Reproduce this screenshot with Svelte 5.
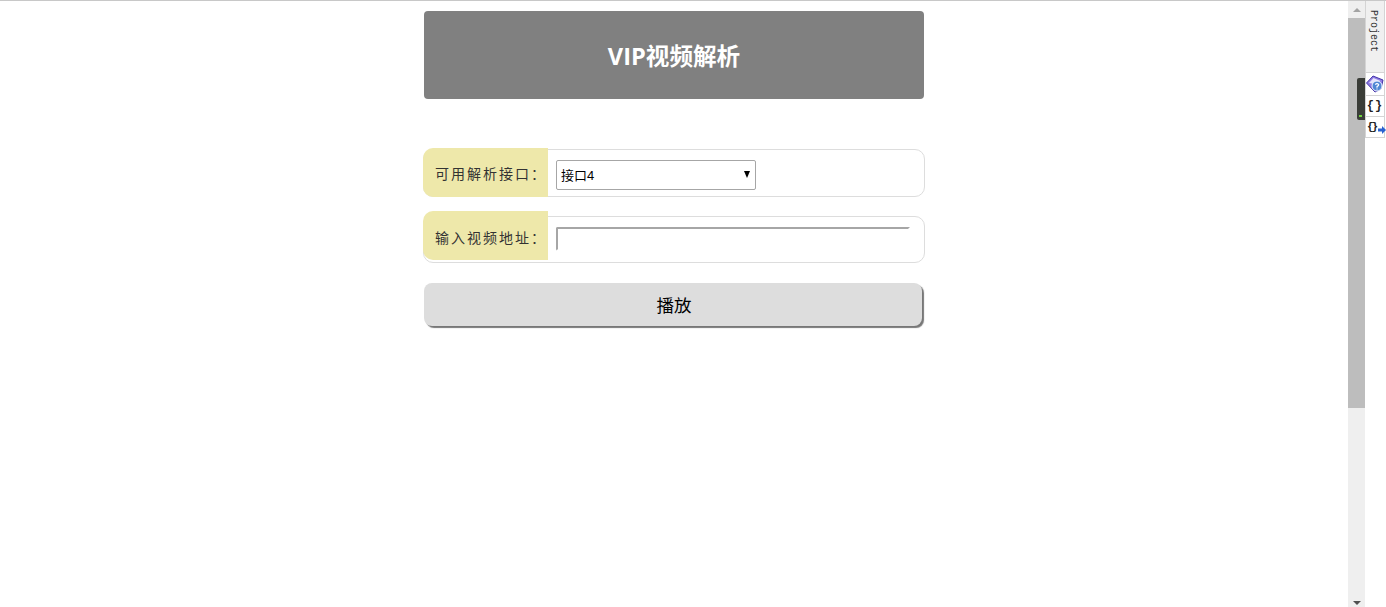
<script>
  let api = 'api4';
  let url = '';
  const apis = [
    { value: 'api1', label: '接口1' },
    { value: 'api2', label: '接口2' },
    { value: 'api3', label: '接口3' },
    { value: 'api4', label: '接口4' }
  ];
</script>

<div class="window">
  <main class="page">
    <div class="container">
      <h1 class="title">VIP视频解析</h1>

      <div class="field first">
        <label class="addon" for="api">可用解析接口：</label>
        <div class="control">
          <div class="select-box">
            <select id="api" bind:value={api}>
              {#each apis as item}
                <option value={item.value}>{item.label}</option>
              {/each}
            </select>
            <span class="caret"></span>
          </div>
        </div>
      </div>

      <div class="field">
        <label class="addon second" for="url">输入视频地址：</label>
        <div class="control">
          <input id="url" type="text" bind:value={url} />
        </div>
      </div>

      <button class="play" type="button">播放</button>
    </div>
  </main>

  <div class="scrollbar">
    <span class="arrow up"></span>
    <div class="thumb"></div>
    <span class="arrow down"></span>
    <div class="meter"><span class="led"></span></div>
  </div>

  <aside class="toolbar">
    <div class="tab-project"><span>Project</span></div>
    <div class="tool help">
      <svg width="18" height="18" viewBox="0 0 18 18">
        <path d="M0.5 8 L7 1 L17 5 L15 14 L9 17 Z" fill="#8f7de4" stroke="#4434a8" stroke-width="1" />
        <path d="M3 8 L7.5 3 L14.5 6 L9 9 Z" fill="#e6e2fb" />
        <circle cx="11" cy="11" r="5" fill="#4f86d4" stroke="#eef2ff" stroke-width="1" />
        <path d="M9.3 9.6 Q11 7.8 12.7 9.6 Q12.7 10.8 11 11.6 L11 12.8 M11 13.6 L11 14.6" fill="none" stroke="#fff" stroke-width="1.2" />
      </svg>
    </div>
    <div class="tool braces">{'{}'}</div>
    <div class="tool braces-go">
      <span>{'{}'}</span>
      <svg width="8" height="8" viewBox="0 0 8 8"><path d="M0 2.5 H4 V0 L8 4 L4 8 V5.5 H0 Z" fill="#2a62d0" /></svg>
    </div>
  </aside>
</div>

<style>
  :global(body) {
    margin: 0;
    background: #fff;
    overflow: hidden;
  }

  .window {
    display: flex;
    height: 607px;
    box-sizing: border-box;
    border-top: 1px solid #c8c8c8;
    font-family: "Liberation Sans", "Noto Sans CJK SC", sans-serif;
  }

  .page {
    width: 1348px;
    flex: none;
  }

  .container {
    width: 500px;
    margin: 10px auto 0;
  }

  .title {
    margin: 0 0 50px;
    height: 88px;
    line-height: 90px;
    background: #808080;
    border-radius: 4px;
    color: #fff;
    font-family: "Open Sans", "Noto Sans CJK SC", sans-serif;
    font-size: 23.6px;
    font-weight: 700;
    text-align: center;
  }

  .field {
    display: flex;
    height: 47px;
    box-sizing: border-box;
    border: 1px solid #ddd;
    border-radius: 10px;
    margin: 0 -1px 20px;
  }

  .field.first {
    height: 48px;
    margin-bottom: 19px;
  }

  .addon {
    flex: none;
    width: 125px;
    height: 49px;
    margin: -2px 0 0 -1px;
    background: #eee8aa;
    border-radius: 10px 0 0 10px;
    box-sizing: border-box;
    padding-left: 12px;
    line-height: 50px;
    font-family: "Noto Sans CJK SC", sans-serif;
    font-size: 14px;
    letter-spacing: 2px;
    color: #333;
    white-space: nowrap;
    overflow: hidden;
  }

  .addon.second {
    margin-top: -6px;
    line-height: 52px;
  }

  .control {
    flex: 1;
    padding: 10px 0 0 8px;
  }

  .select-box {
    position: relative;
    width: 200px;
    height: 30px;
  }

  select {
    appearance: none;
    display: block;
    width: 100%;
    height: 100%;
    box-sizing: border-box;
    padding: 0 0 0 4px;
    background: #fff;
    border: 1px solid #a6a6a6;
    border-radius: 2px;
    font-family: "Liberation Sans", "Noto Sans CJK SC", sans-serif;
    font-size: 13px;
    color: #000;
  }

  .caret {
    position: absolute;
    right: 6px;
    top: 11px;
    width: 0;
    height: 0;
    border-left: 3.5px solid transparent;
    border-right: 3.5px solid transparent;
    border-top: 7px solid #000;
    pointer-events: none;
  }

  input {
    display: block;
    width: 354px;
    height: 24px;
    box-sizing: border-box;
    padding: 0 4px;
    background: #fff;
    border: 2px solid #fff;
    border-top-color: #a6a6a6;
    border-left-color: #a6a6a6;
    border-radius: 2px 0 0 2px;
    outline: none;
  }

  .play {
    display: block;
    width: 498px;
    height: 43px;
    padding: 0 0 0 2px;
    background: #ddd;
    border: none;
    border-radius: 8px;
    box-shadow: 2px 2px 1px #777;
    box-sizing: border-box;
    font-family: "Noto Sans CJK SC", sans-serif;
    font-size: 17.5px;
    color: #000;
  }

  .scrollbar {
    position: relative;
    width: 17px;
    flex: none;
    background: #efefef;
    display: flex;
    flex-direction: column;
    align-items: center;
    padding-top: 17px;
    box-sizing: border-box;
  }

  .thumb {
    width: 100%;
    height: 390px;
    background: #bdbdbd;
  }

  .arrow {
    position: absolute;
    width: 0;
    height: 0;
    border-left: 4px solid transparent;
    border-right: 4px solid transparent;
  }

  .arrow.up {
    top: 7px;
    border-bottom: 4px solid #a3a3a3;
  }

  .arrow.down {
    bottom: 2px;
    border-top: 4px solid #505050;
  }

  .meter {
    position: absolute;
    left: 9px;
    top: 77px;
    width: 8px;
    height: 42px;
    background: #3a3d38;
    border-radius: 2px 0 0 2px;
  }

  .led {
    position: absolute;
    left: 2px;
    bottom: 3px;
    width: 3px;
    height: 2px;
    background: #6fd13a;
  }

  .toolbar {
    width: 20px;
    flex: none;
    display: flex;
    flex-direction: column;
    background: #fff;
  }

  .tab-project {
    height: 71px;
    background: #f0f0f0;
    border-left: 1px solid #d4d4d4;
    border-right: 1px solid #d4d4d4;
    box-sizing: border-box;
    display: flex;
    justify-content: center;
    padding: 9px 3px 0 0;
  }

  .tab-project span {
    writing-mode: vertical-rl;
    font-family: "Liberation Mono", monospace;
    font-size: 10px;
    color: #333;
  }

  .tool {
    height: 22px;
    box-sizing: border-box;
    border: 1px solid #d4d4d4;
    border-bottom: none;
    background: #fff;
    display: flex;
    align-items: center;
    justify-content: center;
    font-family: "Liberation Mono", monospace;
    font-size: 12px;
    font-weight: 700;
    color: #222;
    white-space: nowrap;
  }

  .help {
    height: 23px;
  }

  .braces {
    height: 21px;
    letter-spacing: 1px;
  }

  .braces-go {
    border-bottom: 1px solid #d4d4d4;
    justify-content: flex-start;
    padding-left: 1px;
    font-size: 11px;
    letter-spacing: -2px;
  }

  .braces-go svg {
    flex: none;
    margin: 6px 0 0 2px;
  }
</style>
